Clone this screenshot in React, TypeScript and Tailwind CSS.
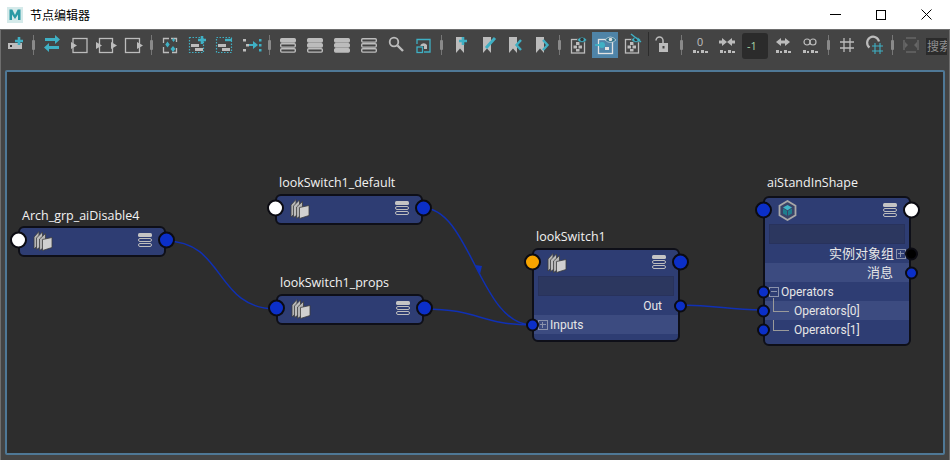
import type { ReactNode } from "react";

const GRAY = "#bcbcbc";
const TEAL = "#3fb0c4";

/* ---- toolbar drawings, all on a 26x26 box ---- */
function Ico({ children }: { children: ReactNode }) {
  return (
    <svg width="26" height="26" viewBox="0 0 26 26" fill="none">
      {children}
    </svg>
  );
}

const Plus = ({ x, y, c = TEAL }: { x: number; y: number; c?: string }) => (
  <path d={`M${x - 4} ${y}h8M${x} ${y - 4}v8`} stroke={c} strokeWidth="2.6" />
);

const dots = (
  <g fill={GRAY}>
    <rect x="6" y="18" width="3" height="3" />
    <rect x="10" y="19" width="2" height="2" />
    <rect x="14" y="18" width="3" height="3" />
    <rect x="18" y="19" width="3" height="2" />
  </g>
);

const Bars = ({ filled }: { filled: boolean[] }) => (
  <g stroke={GRAY} strokeWidth="1.4">
    {[6, 11, 16].map((y, i) => (
      <rect key={y} x="5.7" y={y + 0.7} width="14.6" height="3.4" rx="1" fill={filled[i] ? GRAY : "none"} />
    ))}
  </g>
);

const Bookmark = ({ x = 5 }: { x?: number }) => (
  <path d={`M${x} 5h8v16l-4-4.500-4 4.500z`} fill={GRAY} />
);

const NodeFrame = ({ x = 6 }: { x?: number }) => (
  <g>
    <rect x={x + 0.5} y="7.500" width="13" height="13.500" stroke={GRAY} strokeWidth="1.300" />
    <g fill={GRAY}>
      <rect x={x + 5} y="10" width="3.500" height="3" />
      <rect x={x + 2.500} y="13.500" width="3.500" height="3" />
      <rect x={x + 7.500} y="13.500" width="3.500" height="3" />
      <rect x={x + 5} y="17" width="3.500" height="2.500" />
    </g>
  </g>
);

const Eye = ({ x = 17 }: { x?: number }) => (
  <g>
    <path d={`M${x - 5} 8q5-6 10 0q-5 5-10 0z`} fill={TEAL} stroke="#444" strokeWidth="0.700" />
    <circle cx={x} cy="7.500" r="1.800" fill="#333" />
  </g>
);

const icons: Record<string, ReactNode> = {
  add: (
    <Ico>
      <rect x="6" y="11" width="14" height="6" fill={GRAY} />
      <rect x="8" y="13" width="2" height="2" fill="#333" />
      <Plus x={17} y={9} />
    </Ico>
  ),
  swap: (
    <Ico>
      <path d="M6 6h10V3l5 4.500-5 4.500V9H6z" fill={TEAL} />
      <path d="M20 14H10v-3l-5 4.500 5 4.500v-3h10z" fill={TEAL} />
    </Ico>
  ),
  frameL: (
    <Ico>
      <rect x="7" y="6.500" width="14" height="14" stroke={GRAY} strokeWidth="1.300" />
      <path d="M5 10l6 3.500-6 3.500z" fill={GRAY} />
    </Ico>
  ),
  frameB: (
    <Ico>
      <rect x="6.500" y="6.500" width="13" height="14" stroke={GRAY} strokeWidth="1.300" />
      <path d="M3 10l6 3.500-6 3.500zM18 10l6 3.500-6 3.500z" fill={GRAY} />
    </Ico>
  ),
  frameR: (
    <Ico>
      <rect x="5.500" y="6.500" width="14" height="14" stroke={GRAY} strokeWidth="1.300" />
      <path d="M17 10l6 3.500-6 3.500z" fill={GRAY} />
    </Ico>
  ),
  spark: (
    <Ico>
      <path d="M6.500 11V6.500H12M14 6.500h5.500V10M19.500 16v4.500H15M12 20.500H6.500V15" stroke={GRAY} strokeWidth="1.300" />
      <path d="M10.500 9.500l2.200 3-2.200 3-2.200-3zM16 14l2.500 3-2.500 3-2.500-3zM16.500 6l1.500 2-1.500 2-1.500-2z" fill={TEAL} />
    </Ico>
  ),
  dotPlus: (
    <Ico>
      <rect x="5.500" y="5.500" width="14" height="15" stroke={TEAL} strokeWidth="1.200" strokeDasharray="1.500 1.500" />
      <rect x="7" y="12" width="8" height="3" fill={GRAY} />
      <rect x="11" y="16" width="8" height="3" fill={GRAY} />
      <Plus x={18} y={8} />
    </Ico>
  ),
  dotMinus: (
    <Ico>
      <rect x="5.500" y="5.500" width="15" height="15" stroke={TEAL} strokeWidth="1.200" strokeDasharray="1.500 1.500" />
      <rect x="7" y="12" width="8" height="3" fill={GRAY} />
      <rect x="11" y="16" width="8" height="3" fill={GRAY} />
      <path d="M14 8h7" stroke={TEAL} strokeWidth="2.400" />
    </Ico>
  ),
  dotArrow: (
    <Ico>
      <g fill={GRAY}>
        <rect x="5" y="7" width="3" height="2.500" />
        <rect x="5" y="17" width="3" height="2.500" />
        <rect x="8" y="12" width="3" height="2.500" />
      </g>
      <path d="M11 12h4V9l5 4-5 4v-3h-4z" fill={TEAL} />
      <g fill={TEAL}>
        <rect x="21" y="7" width="2.500" height="2.500" />
        <rect x="21" y="12" width="2.500" height="2.500" />
        <rect x="21" y="17" width="2.500" height="2.500" />
      </g>
    </Ico>
  ),
  bars1: <Ico><Bars filled={[true, false, false]} /></Ico>,
  bars2: <Ico><Bars filled={[true, true, false]} /></Ico>,
  bars3: <Ico><Bars filled={[true, true, true]} /></Ico>,
  bars0: <Ico><Bars filled={[false, false, false]} /></Ico>,
  search: (
    <Ico>
      <circle cx="11" cy="10" r="4.300" stroke={GRAY} strokeWidth="1.800" />
      <path d="M14.500 13.500l5.500 5.500" stroke={GRAY} strokeWidth="2.400" />
    </Ico>
  ),
  fit: (
    <Ico>
      <path d="M7 12V7.500h13V20H14" stroke={TEAL} strokeWidth="1.300" />
      <rect x="7" y="15" width="5.500" height="5.500" stroke={TEAL} strokeWidth="1.300" />
      <path d="M10.500 13a4 4 0 0 1 6.500 0v4h-3v-3h-3.500z" fill={GRAY} />
    </Ico>
  ),
  bmPlus: (
    <Ico>
      <Bookmark x={9} />
      <Plus x={16} y={9} />
    </Ico>
  ),
  bmEdit: (
    <Ico>
      <Bookmark x={9} />
      <path d="M12 16l9-10" stroke={TEAL} strokeWidth="3" />
    </Ico>
  ),
  bmLeft: (
    <Ico>
      <Bookmark x={8} />
      <path d="M20 8l-4.500 5 4.500 5" stroke={TEAL} strokeWidth="2.400" />
    </Ico>
  ),
  bmRight: (
    <Ico>
      <Bookmark x={8} />
      <path d="M15 8l4.500 5-4.500 5" stroke={TEAL} strokeWidth="2.400" />
    </Ico>
  ),
  eye: (
    <Ico>
      <NodeFrame x={6} />
      <Eye />
    </Ico>
  ),
  eyeLink: (
    <Ico>
      <rect x="6.500" y="7.500" width="14" height="14" stroke="#e2e2e2" strokeWidth="1.300" />
      <path d="M3 13h8" stroke={TEAL} strokeWidth="1.800" />
      <circle cx="10" cy="13" r="3" fill={TEAL} />
      <rect x="13" y="15" width="4" height="3" fill="#e2e2e2" />
      <path d="M13 8q5.500-6 11 0q-5.500 5-11 0z" fill="#2f6f86" stroke="#d0e0e6" strokeWidth="0.700" />
      <circle cx="18.500" cy="7.500" r="1.800" fill="#e2e2e2" />
    </Ico>
  ),
  eyeOff: (
    <Ico>
      <NodeFrame x={6} />
      <Eye x={17} />
      <path d="M12 2l10 8" stroke={TEAL} strokeWidth="1.400" />
    </Ico>
  ),
  lock: (
    <Ico>
      <path d="M6 8.500a3.500 3.500 0 0 1 7 0v3" stroke={GRAY} strokeWidth="1.500" />
      <rect x="9" y="11" width="9" height="9" fill={GRAY} />
      <rect x="12.500" y="14" width="2" height="2.500" fill="#444" />
    </Ico>
  ),
  zero: (
    <Ico>
      <text x="13" y="14" textAnchor="middle" fontSize="11" fill={GRAY} fontFamily="Liberation Sans, sans-serif">0</text>
      {dots}
    </Ico>
  ),
  inward: (
    <Ico>
      <path d="M5 8.500h3V6l5 4-5 4v-2.500H5zM21 8.500h-3V6l-5 4 5 4v-2.500h3z" fill={GRAY} />
      {dots}
    </Ico>
  ),
  outward: (
    <Ico>
      <path d="M6 10l5-4v2.500h4V6l5 4-5 4v-2.500h-4V14z" fill={GRAY} />
      {dots}
    </Ico>
  ),
  infinity: (
    <Ico>
      <circle cx="10" cy="10" r="3" stroke={GRAY} strokeWidth="1.200" />
      <circle cx="16" cy="10" r="3" stroke={GRAY} strokeWidth="1.200" />
      {dots}
    </Ico>
  ),
  grid: (
    <Ico>
      <path d="M10 6v14M16 6v14M6 10h14M6 16h14" stroke={GRAY} strokeWidth="1.300" />
    </Ico>
  ),
  magnet: (
    <Ico>
      <path d="M8.500 15.500A6 6 0 1 1 18 9.500" stroke={GRAY} strokeWidth="2.200" />
      <path d="M14 11v11M19 11v11M11 14h11M11 19h11" stroke={TEAL} strokeWidth="1.100" />
    </Ico>
  ),
  dim: (
    <Ico>
      <path d="M8 6H18M8 20H18" stroke="#666" strokeWidth="1.600" />
      <path d="M6 8v10M20 8v10" stroke="#666" strokeWidth="1.600" />
      <path d="M7 10l3 3-3 3zM19 10l-3 3 3 3z" fill="#666" />
    </Ico>
  ),
};

function Tool({ name, active }: { name: string; active?: boolean }) {
  return (
    <div className="w-[27px] h-[26px] shrink-0">
      <div className={active ? "w-[26px] h-[26px] bg-[#4f84a8]" : "w-[26px] h-[26px]"}>{icons[name]}</div>
    </div>
  );
}

function Sep() {
  return (
    <div className="relative w-[10px] h-[26px] shrink-0">
      <div className="absolute left-[3px] top-[3px] w-px h-5 ml-px bg-[#777]" />
      <div className="absolute left-[3px] top-[8px] w-[3px] h-[10px] bg-[#8a8a8a] rounded-[1px]" />
    </div>
  );
}

/* ---- node editor pieces ---- */
function FolderStack() {
  return (
    <svg width="20" height="21" viewBox="0 0 20 21" stroke="#3c3c3c" strokeWidth="0.800">
      <path d="M1 7l5-5.500v13L1 19z" fill="#b4b4b4" />
      <path d="M3.500 8l6-6v13.500l-6 4z" fill="#bebebe" />
      <path d="M6.500 9l6-5.500v13l-6 4z" fill="#b4b4b4" />
      <path d="M9.500 9.500l9.500-2v10l-9.500 3z" fill="#d0d0d0" />
    </svg>
  );
}

function StackIcon() {
  return (
    <svg width="14" height="14" viewBox="0 0 14 14">
      <rect x="0" y="0" width="14" height="4" rx="1.500" fill="#c4c4c4" />
      <rect x="0.500" y="5.500" width="13" height="3" rx="1.500" fill="none" stroke="#bdbdbd" />
      <rect x="0.500" y="10.500" width="13" height="3" rx="1.500" fill="none" stroke="#bdbdbd" />
    </svg>
  );
}

function CubeIcon() {
  return (
    <svg width="19" height="21" viewBox="0 0 19 21">
      <path d="M9.500 1l8 4.700v9.600l-8 4.700-8-4.700V5.700z" fill="#3a4468" stroke="#a8a8a8" strokeWidth="1.800" />
      <path d="M9.500 5l4.500 2.600-4.500 2.600L5 7.600z" fill="#3fb6c8" />
      <path d="M5 8.500l4 2.300v5L5 13.500zM14 8.500l-4 2.300v5l4-2.300z" fill="#1f7d8e" />
    </svg>
  );
}

function Port({ side, big, color }: { side: "l" | "r"; big?: boolean; color: string }) {
  const pos = big
    ? side === "l"
      ? "left-[-10px] w-[17px] h-[17px]"
      : "right-[-11px] w-[17px] h-[17px]"
    : side === "l"
      ? "left-[-8px] w-[13px] h-[13px]"
      : "right-[-9px] w-[13px] h-[13px]";
  return (
    <span
      className={`absolute top-1/2 -translate-y-1/2 z-10 rounded-full border-2 border-[#0b0b12] ${pos} ${color}`}
    />
  );
}

function Expand({ minus }: { minus?: boolean }) {
  return (
    <span className="relative inline-block w-[10px] h-[10px] border border-[#8a92ac] shrink-0">
      <span className="absolute left-px right-px top-[3px] h-px bg-[#8a92ac]" />
      {!minus && <span className="absolute top-px bottom-px left-[3px] w-px bg-[#8a92ac]" />}
    </span>
  );
}

function Row({ light, className, children }: { light?: boolean; className?: string; children: ReactNode }) {
  return (
    <div
      className={`relative h-[19px] flex items-center text-[#e6e6e6] ${light ? "bg-[#3c4b80]" : ""} ${
        className ?? "text-xs"
      }`}
    >
      {children}
    </div>
  );
}

function Node({
  pos,
  label,
  labelPos,
  icon,
  left,
  right,
  children,
}: {
  pos: string;
  label: string;
  labelPos: string;
  icon: ReactNode;
  left: string;
  right: string;
  children?: ReactNode;
}) {
  return (
    <div className={`absolute w-[148px] rounded-[6px] border-2 border-[#0e0f18] bg-[#2e3d73] ${pos}`}>
      <span className={`absolute whitespace-nowrap text-[12.5px] leading-4 text-[#f2f2f2] ${labelPos}`}>{label}</span>
      <div className="relative h-[24px] flex items-center justify-between pl-[13px] pr-[12px]">
        <Port side="l" big color={left} />
        {icon}
        <StackIcon />
        <Port side="r" big color={right} />
      </div>
      {children}
    </div>
  );
}

function NameBox() {
  return <div className="h-[20px] mt-[2px] mx-1 border border-[#28325c] bg-[#2c375f]" />;
}

const BLUE = "bg-[#0b2fc8]";
const ROBOTO = { fontFamily: 'Roboto, "Noto Sans CJK SC", sans-serif' };

export default function App() {
  return (
    <div
      className="w-[950px] h-[460px] flex flex-col bg-white overflow-hidden"
      style={{ fontFamily: '"Open Sans", "Noto Sans CJK SC", sans-serif' }}
    >
      {/* title bar */}
      <div className="h-[29px] shrink-0 flex items-center pl-[7px] relative">
        <svg width="16" height="16" viewBox="0 0 16 16">
          <rect width="16" height="16" fill="#d5eaea" />
          <path d="M2.500 13V2.500h2.800L8 8l2.700-5.500h2.800V13h-2.500V7.500L8 12 5 7.500V13z" fill="#2a9aa5" />
        </svg>
        <span className="ml-[7px] text-xs text-black" style={{ fontFamily: '"Noto Sans CJK SC", sans-serif' }}>
          节点编辑器
        </span>
        <div className="ml-auto flex items-center gap-[35px] pr-[18px]">
          <span className="w-[11px] h-px bg-black" />
          <span className="w-[10px] h-[10px] border border-black" />
          <svg width="11" height="11" viewBox="0 0 11 11">
            <path d="M.5.5l10 10M10.500.5l-10 10" stroke="#000" />
          </svg>
        </div>
      </div>

      {/* editor body */}
      <div className="flex-1 flex flex-col bg-[#444444] border-t border-l border-r border-[#6e6e6e] min-h-0">
        <div className="h-[40px] shrink-0 flex items-start pt-[2px] pl-[1px]">
          <Tool name="add" />
          <Sep />
          <Tool name="swap" />
          <Tool name="frameL" />
          <Tool name="frameB" />
          <Tool name="frameR" />
          <Sep />
          <Tool name="spark" />
          <Tool name="dotPlus" />
          <Tool name="dotMinus" />
          <Tool name="dotArrow" />
          <Sep />
          <Tool name="bars1" />
          <Tool name="bars2" />
          <Tool name="bars3" />
          <Tool name="bars0" />
          <Tool name="search" />
          <Tool name="fit" />
          <Sep />
          <Tool name="bmPlus" />
          <Tool name="bmEdit" />
          <Tool name="bmLeft" />
          <Tool name="bmRight" />
          <Sep />
          <Tool name="eye" />
          <Tool name="eyeLink" active />
          <Tool name="eyeOff" />
          <div className="w-[4px] h-[26px] shrink-0 flex justify-center">
            <span className="w-px h-[24px] bg-[#2c2c2c]" />
          </div>
          <Tool name="lock" />
          <Sep />
          <Tool name="zero" />
          <Tool name="inward" />
          <div className="w-[26px] h-[26px] ml-px mt-px shrink-0 rounded-[3px] bg-[#2b2b2b] text-[11px] leading-[26px] pl-[5px] text-[#a8d8a8]">
            -1
          </div>
          <div className="w-[2px] shrink-0" />
          <Tool name="outward" />
          <Tool name="infinity" />
          <Sep />
          <Tool name="grid" />
          <Tool name="magnet" />
          <Sep />
          <Tool name="dim" />
          <div className="w-[21px] h-[17px] ml-px mt-[6px] shrink-0 bg-[#2b2b2b] overflow-hidden whitespace-nowrap text-xs leading-[17px] pl-px text-[#8f8f8f]">
            搜索
          </div>
        </div>

        {/* graph canvas */}
        <div className="relative flex-1 ml-1 mr-1 mb-[5px] rounded-[2px] border-2 border-[#4f7896] bg-[#2d2d2d]">
          <svg className="absolute inset-0" width="936" height="381" viewBox="7 72 936 381" fill="none">
            <g stroke="#1030b4" strokeWidth="1.500">
              <path d="M166 241C225 241 215 309 276 309" />
              <path d="M423 208C470 208 480 325 532 325" />
              <path d="M424 309C480 309 480 325 532 325" />
              <path d="M680 305C720 305 725 310 763 310" />
            </g>
            <path d="M475 265l7 1-2 8z" fill="#1030b4" />
          </svg>

          <Node
            pos="left-[11px] top-[154px] h-[31px]"
            label="Arch_grp_aiDisable4"
            labelPos="left-[2px] -top-[20px]"
            icon={<FolderStack />}
            left="bg-white"
            right={BLUE}
          />
          <Node
            pos="left-[268px] top-[122px] h-[31px]"
            label="lookSwitch1_default"
            labelPos="left-[2px] -top-[21px]"
            icon={<FolderStack />}
            left="bg-white"
            right={BLUE}
          />
          <Node
            pos="left-[269px] top-[222px] h-[31px]"
            label="lookSwitch1_props"
            labelPos="left-[2px] -top-[21px]"
            icon={<FolderStack />}
            left={BLUE}
            right={BLUE}
          />
          <Node
            pos="left-[525px] top-[176px] h-[94px]"
            label="lookSwitch1"
            labelPos="left-[2px] -top-[21px]"
            icon={<FolderStack />}
            left="bg-[#f7a400]"
            right={BLUE}
          >
            <NameBox />
            <Row className="justify-end pr-[16px] text-xs pt-px">
              <span style={ROBOTO}>Out</span>
              <Port side="r" color={BLUE} />
            </Row>
            <Row light className="pl-[4px] gap-[2px] text-xs pt-px">
              <Port side="l" color={BLUE} />
              <Expand />
              <span style={ROBOTO}>Inputs</span>
            </Row>
          </Node>
          <Node
            pos="left-[756px] top-[124px] h-[150px]"
            label="aiStandInShape"
            labelPos="left-[2px] -top-[23px]"
            icon={<CubeIcon />}
            left={BLUE}
            right="bg-white"
          >
            <NameBox />
            <Row className="justify-end pr-[3px] gap-[2px] text-[13px]">
              实例对象组
              <Expand />
              <Port side="r" color="bg-black" />
            </Row>
            <Row light className="justify-end pr-[16px] text-[13px]">
              消息
              <Port side="r" color={BLUE} />
            </Row>
            <Row className="pl-[4px] gap-[2px] text-xs pt-px">
              <Port side="l" color={BLUE} />
              <Expand minus />
              <span style={ROBOTO}>Operators</span>
            </Row>
            <Row light className="pl-[29px] text-xs pt-px">
              <Port side="l" color={BLUE} />
              <span className="absolute left-[8px] top-[-3px] bottom-1/2 w-px bg-[#9a9a9a]" />
              <span className="absolute left-[8px] top-1/2 w-[16px] h-px bg-[#9a9a9a]" />
              <span style={ROBOTO}>Operators[0]</span>
            </Row>
            <Row className="pl-[29px] text-xs pt-px">
              <Port side="l" color={BLUE} />
              <span className="absolute left-[8px] top-0 bottom-1/2 w-px bg-[#9a9a9a]" />
              <span className="absolute left-[8px] top-1/2 w-[16px] h-px bg-[#9a9a9a]" />
              <span style={ROBOTO}>Operators[1]</span>
            </Row>
          </Node>
        </div>
      </div>
    </div>
  );
}
